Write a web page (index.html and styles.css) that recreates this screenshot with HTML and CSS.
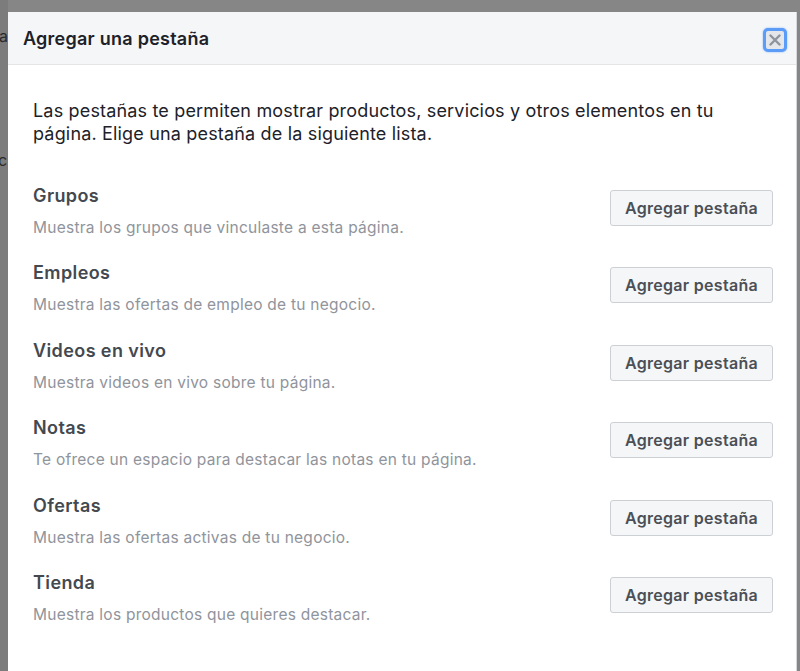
FILE: index.html
```html
<!DOCTYPE html>
<html lang="es">
<head>
<meta charset="utf-8">
<title>Agregar una pestaña</title>
<link rel="stylesheet" href="styles.css">
</head>
<body>
<div class="backdrop">
  <div class="bg-frag bg-frag-1">la</div>
  <div class="bg-frag bg-frag-2">c</div>
</div>
<div class="dialog">
  <div class="dialog-header">
    <h1 class="dialog-title">Agregar una pestaña</h1>
    <button class="close-btn" aria-label="Cerrar">
      <svg width="12" height="12" viewBox="0 0 12 12"><path d="M1.5 1.5 L10.5 10.5 M10.5 1.5 L1.5 10.5" stroke="#8d949e" stroke-width="2.4" stroke-linecap="round"/></svg>
    </button>
  </div>
  <div class="dialog-body">
    <p class="intro">Las pestañas te permiten mostrar productos, servicios y otros elementos en tu página. Elige una pestaña de la siguiente lista.</p>
    <ul class="tab-list">
      <li class="tab-item">
        <div class="tab-info"><div class="tab-name">Grupos</div><div class="tab-desc">Muestra los grupos que vinculaste a esta página.</div></div>
        <button class="add-btn">Agregar pestaña</button>
      </li>
      <li class="tab-item">
        <div class="tab-info"><div class="tab-name">Empleos</div><div class="tab-desc">Muestra las ofertas de empleo de tu negocio.</div></div>
        <button class="add-btn">Agregar pestaña</button>
      </li>
      <li class="tab-item">
        <div class="tab-info"><div class="tab-name">Videos en vivo</div><div class="tab-desc">Muestra videos en vivo sobre tu página.</div></div>
        <button class="add-btn">Agregar pestaña</button>
      </li>
      <li class="tab-item">
        <div class="tab-info"><div class="tab-name">Notas</div><div class="tab-desc">Te ofrece un espacio para destacar las notas en tu página.</div></div>
        <button class="add-btn">Agregar pestaña</button>
      </li>
      <li class="tab-item">
        <div class="tab-info"><div class="tab-name">Ofertas</div><div class="tab-desc">Muestra las ofertas activas de tu negocio.</div></div>
        <button class="add-btn">Agregar pestaña</button>
      </li>
      <li class="tab-item">
        <div class="tab-info"><div class="tab-name">Tienda</div><div class="tab-desc">Muestra los productos que quieres destacar.</div></div>
        <button class="add-btn">Agregar pestaña</button>
      </li>
    </ul>
  </div>
</div>
</body>
</html>
```
FILE: styles.css
```css
html, body {
  margin: 0;
  padding: 0;
  height: 100%;
  overflow: hidden;
}
body {
  background: #868686;
  font-family: "Inter", "Liberation Sans", Arial, sans-serif;
  position: relative;
  padding: 12px 3px 0 8px;
  box-sizing: border-box;
}
.backdrop {
  position: absolute;
  left: 0;
  top: 0;
  width: 8px;
  height: 100%;
  background: #7c7c7c;
  overflow: hidden;
}
.bg-frag {
  position: absolute;
  font-size: 16px;
  color: #2a2a2a;
}
.bg-frag-1 { top: 26px; left: -5px; }
.bg-frag-2 { top: 150px; left: -2px; }
.dialog {
  background: #fff;
  height: 100%;
  border-right: 1px solid #d6d8dc;
  position: relative;
}
.dialog-header {
  height: 52px;
  background: #f5f6f7;
  border-bottom: 1px solid #e5e5e5;
  display: flex;
  align-items: center;
  justify-content: space-between;
  padding: 0 9px 0 15px;
}
.dialog-title {
  margin: 0;
  font-size: 18px;
  font-weight: 600;
  color: #1d2129;
  letter-spacing: 0.25px;
}
.close-btn {
  width: 24px;
  height: 24px;
  padding: 0;
  border: 3px solid #5b9cf8;
  border-radius: 5px;
  background: #e4e6ea;
  display: flex;
  align-items: center;
  justify-content: center;
  box-shadow: 0 0 2px #7fb2ff;
  margin-top: 3px;
}
.dialog-body {
  padding: 34px 23px 0 25px;
}
.intro {
  margin: 0 0 40px 0;
  font-size: 18px;
  line-height: 23px;
  color: #1d2129;
  letter-spacing: 0.17px;
}
.tab-list {
  list-style: none;
  margin: 0;
  padding: 0;
}
.tab-item {
  display: flex;
  justify-content: space-between;
  align-items: flex-start;
  height: 77.4px;
}
.tab-name {
  font-size: 18px;
  font-weight: 600;
  color: #444950;
  line-height: 22px;
  letter-spacing: 0.4px;
}
.tab-desc {
  font-size: 15.5px;
  color: #90949c;
  line-height: 20px;
  margin-top: 11px;
  letter-spacing: 0.25px;
}
.add-btn {
  width: 163px;
  height: 36px;
  margin-top: 5px;
  background: #f5f6f7;
  border: 1px solid #ccd0d5;
  border-radius: 3px;
  font-family: inherit;
  font-size: 16px;
  font-weight: 600;
  color: #4b4f56;
  letter-spacing: 0.3px;
  padding: 0;
}
```
